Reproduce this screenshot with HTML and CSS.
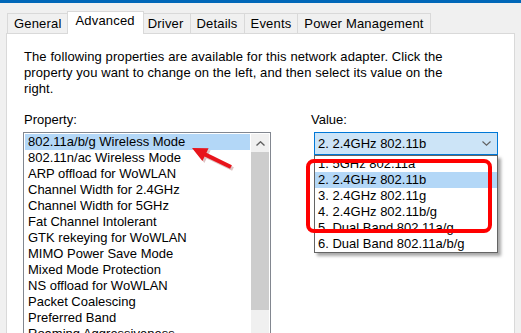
FILE: index.html
```html
<!DOCTYPE html>
<html>
<head>
<meta charset="utf-8">
<link rel="stylesheet" href="styles.css">
</head>
<body>
<div class="titlebar"></div>
<div class="tabs">
  <div class="tab">General</div>
  <div class="tab selected">Advanced</div>
  <div class="tab">Driver</div>
  <div class="tab">Details</div>
  <div class="tab">Events</div>
  <div class="tab">Power Management</div>
</div>
<div class="panel">
  <p class="intro">The following properties are available for this network adapter. Click the<br>property you want to change on the left, and then select its value on the<br>right.</p>
  <div class="columns">
    <div class="col-prop">
      <div class="label">Property:</div>
      <div class="listbox">
        <div class="items">
          <div class="item sel">802.11a/b/g Wireless Mode</div>
          <div class="item">802.11n/ac Wireless Mode</div>
          <div class="item">ARP offload for WoWLAN</div>
          <div class="item">Channel Width for 2.4GHz</div>
          <div class="item">Channel Width for 5GHz</div>
          <div class="item">Fat Channel Intolerant</div>
          <div class="item">GTK rekeying for WoWLAN</div>
          <div class="item">MIMO Power Save Mode</div>
          <div class="item">Mixed Mode Protection</div>
          <div class="item">NS offload for WoWLAN</div>
          <div class="item">Packet Coalescing</div>
          <div class="item">Preferred Band</div>
          <div class="item">Roaming Aggressiveness</div>
        </div>
        <div class="scrollbar">
          <div class="sb-btn"><svg width="9" height="5" viewBox="0 0 9 5"><path d="M0.5 4.5 L4.5 0.8 L8.5 4.5" fill="none" stroke="#606060" stroke-width="1.4"/></svg></div>
          <div class="sb-thumb"></div>
          <div class="sb-track"></div>
        </div>
      </div>
    </div>
    <div class="col-value">
      <div class="label">Value:</div>
      <div class="combo-wrap">
        <div class="combo"><span>2. 2.4GHz 802.11b</span><svg width="9" height="5" viewBox="0 0 9 5"><path d="M0.5 0.5 L4.5 4.2 L8.5 0.5" fill="none" stroke="#606060" stroke-width="1.1"/></svg></div>
        <div class="dropdown">
          <div class="opt">1. 5GHz 802.11a</div>
          <div class="opt sel">2. 2.4GHz 802.11b</div>
          <div class="opt">3. 2.4GHz 802.11g</div>
          <div class="opt">4. 2.4GHz 802.11b/g</div>
          <div class="opt">5. Dual Band 802.11a/g</div>
          <div class="opt">6. Dual Band 802.11a/b/g</div>
        </div>
      </div>
    </div>
  </div>
</div>
<svg class="annot" width="521" height="333" viewBox="0 0 521 333">
  <rect x="308" y="161" width="182" height="70" rx="6" ry="6" fill="none" stroke="#ff0000" stroke-width="4"/>
  <polygon points="193,149 209.6,149.3 207.4,153.8 232.9,166.2 231.1,169.8 205.6,157.4 203.4,161.9" fill="#7a1010" opacity="0.25" transform="translate(1,1)"/>
  <polygon points="192,148 208.6,148.3 206.4,152.8 231.9,165.2 230.1,168.8 204.6,156.4 202.4,160.9" fill="#e8141b"/>
</svg>
</body>
</html>
```

FILE: styles.css
```css
html, body {
  margin: 0;
  padding: 0;
}
body {
  width: 521px;
  height: 333px;
  overflow: hidden;
  background: #f0f0f0;
  font-family: "Liberation Sans", Arial, sans-serif;
  font-size: 13px;
  color: #000;
  position: relative;
}
.titlebar {
  height: 3px;
  background: #0067b8;
}
.tabs {
  display: flex;
  align-items: flex-end;
  height: 30px;
  padding-left: 7px;
  position: relative;
  z-index: 2;
}
.tab {
  height: 19px;
  line-height: 19px;
  padding: 0 6px;
  border: 1px solid #d9d9d9;
  border-bottom: none;
  background: #f0f0f0;
  margin-left: -1px;
  white-space: nowrap;
  letter-spacing: 0.18px;
}
.tab:first-child {
  margin-left: 0;
}
.tab.selected {
  height: 22px;
  line-height: 18px;
  background: #fff;
  margin: 0 -2px -1px -2px;
  padding: 0 8px;
  position: relative;
  z-index: 1;
}
.panel {
  margin-left: 6px;
  width: 509px;
  height: 320px;
  border: 1px solid #d9d9d9;
  background: #fff;
  padding-top: 15px;
  box-sizing: border-box;
}
.intro {
  margin: 0;
  padding-left: 17px;
  line-height: 16px;
  white-space: nowrap;
  letter-spacing: 0.1px;
}
.columns {
  display: flex;
  margin-top: 15px;
  padding-left: 16px;
}
.label {
  line-height: 16px;
  padding-left: 1px;
  margin-bottom: 4px;
}
.col-prop {
  width: 248px;
}
.col-value {
  margin-left: 39px;
}
.listbox {
  display: flex;
  height: 220px;
  border: 1px solid #828790;
  padding: 1px;
  box-sizing: border-box;
}
.items {
  flex: 1;
}
.item {
  height: 16px;
  line-height: 16px;
  padding-left: 3px;
  white-space: nowrap;
  overflow: hidden;
}
.item.sel {
  background: #b3d7f7;
}
.scrollbar {
  width: 18px;
  margin-left: 1px;
  display: flex;
  flex-direction: column;
}
.sb-btn {
  height: 18px;
  background: #f0f0f0;
  display: flex;
  align-items: center;
  justify-content: center;
}
.sb-thumb {
  height: 158px;
  background: #cdcdcd;
}
.sb-track {
  flex: 1;
  background: #f0f0f0;
}
.combo-wrap {
  position: relative;
  margin-left: 4px;
  width: 184px;
}
.combo {
  height: 23px;
  box-sizing: border-box;
  border: 1px solid #0078d7;
  background: #cce4f7;
  display: flex;
  align-items: center;
  justify-content: space-between;
  padding: 0 6px 0 3px;
}
.dropdown {
  position: absolute;
  top: 23px;
  left: 0;
  width: 184px;
  box-sizing: border-box;
  border: 1px solid #646464;
  background: #fff;
  box-shadow: 3px 3px 3px rgba(0, 0, 0, 0.35);
}
.opt {
  height: 16px;
  line-height: 16px;
  padding-left: 3px;
  white-space: nowrap;
}
.opt.sel {
  background: #b3d7f7;
}
.annot {
  position: absolute;
  top: 0;
  left: 0;
  pointer-events: none;
  z-index: 5;
}
```
